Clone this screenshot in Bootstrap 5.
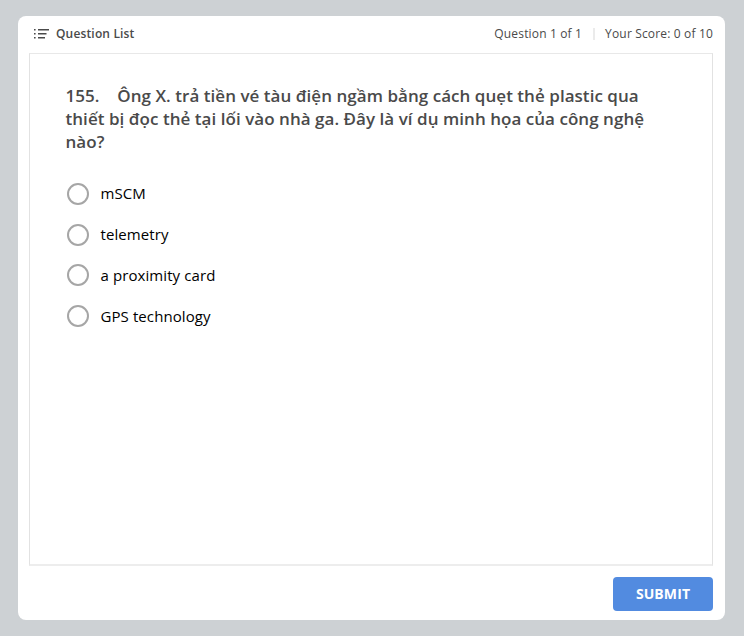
<!DOCTYPE html>
<html lang="vi">
<head>
<meta charset="utf-8">
<meta name="viewport" content="width=device-width, initial-scale=1">
<title>Quiz</title>
<link href="https://cdn.jsdelivr.net/npm/bootstrap@5.3.0/dist/css/bootstrap.min.css" rel="stylesheet">
<style>
body{background:#cdd1d4;font-family:"Open Sans",sans-serif;color:#4a4a4a;height:636px;overflow:hidden;padding:16px 19px 16px 18px}
.quiz{height:604px;border-radius:8px;padding:0 12px 9px 11px}
.quiz-head{height:37px;font-size:12px;line-height:16px;padding:0 0 1px 5px;letter-spacing:.16px}
.quiz-head svg{margin:0 7px 1px 0}
.divider{width:2px;height:12px;background:#ebebeb;margin:0 10px 0 11px}
.panel{border:1px solid #e2e2e2;border-width:1px 1px 2px;border-top-color:#e8e8e8;border-bottom-color:#ededed;padding:30px 35.5px;height:513px}
.question{font-size:17px;line-height:23px;font-weight:600;margin:0 0 20.4px;letter-spacing:.04px}
.opt{height:40.8px;font-size:15px;color:#000;line-height:20px;letter-spacing:.09px}
.opt input{appearance:none;width:22px;height:22px;border:2px solid #a6a6a6;border-radius:50%;margin:0 11.5px 0 1.5px;background:#fff}
.opt span{margin-top:-1px}
.submit,.submit:hover{width:100px;height:34px;background:#528be0;color:#fff;font-size:14px;font-weight:700;border-radius:4px;margin-top:10.5px;padding:0;border:0;letter-spacing:.1px}
</style>
</head>
<body>
<main class="quiz bg-white d-flex flex-column">
<header class="quiz-head d-flex align-items-center">
<svg width="15" height="12" viewBox="0 0 15 12" fill="#4a4a4a"><path d="M0 1h1.6v1.6H0zM4 1h11v1.6H4zM0 5h1.6v1.6H0zM4 5h8.5v1.6H4zM0 9h1.6v1.6H0zM4 9h7v1.6H4z"/></svg>
<span class="fw-semibold">Question List</span>
<span class="ms-auto">Question 1 of 1</span><span class="divider"></span><span>Your Score: 0 of 10</span>
</header>
<section class="panel">
<h1 class="question">155.&nbsp;&nbsp;&nbsp; Ông X. trả tiền vé tàu điện ngầm bằng cách quẹt thẻ plastic qua thiết bị đọc thẻ tại lối vào nhà ga. Đây là ví dụ minh họa của công nghệ nào?</h1>
<label class="opt d-flex align-items-center"><input type="radio" name="answer"><span>mSCM</span></label>
<label class="opt d-flex align-items-center"><input type="radio" name="answer"><span>telemetry</span></label>
<label class="opt d-flex align-items-center"><input type="radio" name="answer"><span>a proximity card</span></label>
<label class="opt d-flex align-items-center"><input type="radio" name="answer"><span>GPS technology</span></label>
</section>
<button class="btn submit align-self-end" type="button">SUBMIT</button>
</main>
<script src="https://cdn.jsdelivr.net/npm/bootstrap@5.3.0/dist/js/bootstrap.bundle.min.js"></script>
</body>
</html>
